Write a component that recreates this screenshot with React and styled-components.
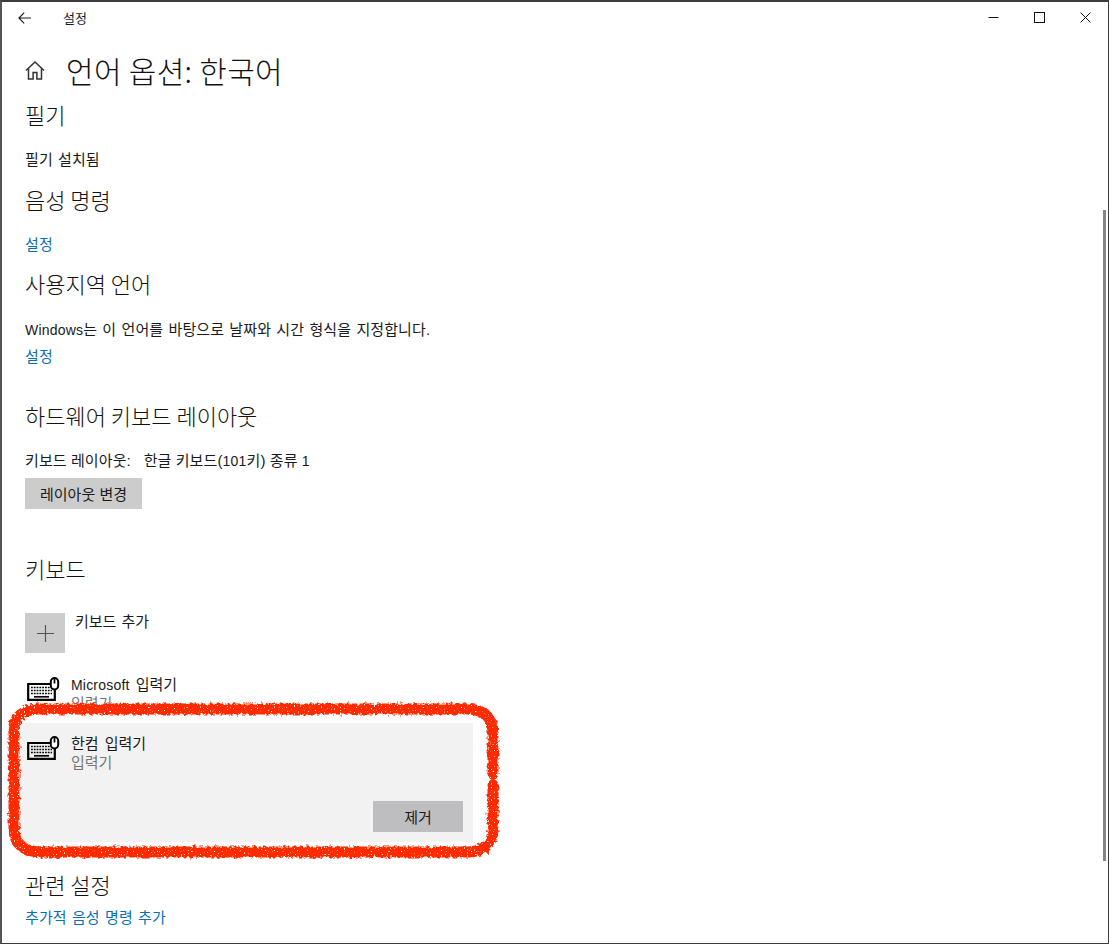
import React from "react";
import styled, { createGlobalStyle } from "styled-components";

const GlobalStyle = createGlobalStyle`
  html, body {
    margin: 0;
    padding: 0;
    background: #fff;
  }
  body {
    font-family: "Liberation Sans", "Noto Sans CJK KR", sans-serif;
    color: #1a1a1a;
  }
`;

function KeyboardIcon() {
  return (
    <IconBox>
      <svg width="33" height="26" viewBox="0 0 33 26" fill="none">
        <path d="M24 8H1.2v15.8h26.6V13" stroke="#000" strokeWidth="2.2" />
        <path d="M4 11.5h19M4 14.5h21M4 17.5h21" stroke="#000" strokeWidth="1.7" strokeDasharray="1.8 1" />
        <path d="M7 20.8h15" stroke="#000" strokeWidth="1.7" />
        <rect x="23.8" y="2" width="7.4" height="11.5" rx="3.7" fill="#fff" stroke="#000" strokeWidth="2" />
        <path d="M27.5 2.5v5" stroke="#000" strokeWidth="1.7" />
      </svg>
    </IconBox>
  );
}

function Scribble() {
  return (
    <ScribbleSvg viewBox="0 0 520 180" fill="none">
      <defs>
        <filter id="rough" x="-5%" y="-10%" width="110%" height="120%">
          <feTurbulence type="fractalNoise" baseFrequency="0.3" numOctaves="2" seed="4" result="wobble" />
          <feDisplacementMap in="SourceGraphic" in2="wobble" scale="6" result="moved" />
          <feTurbulence type="fractalNoise" baseFrequency="0.7" numOctaves="1" seed="9" />
          <feColorMatrix values="0 0 0 0 0  0 0 0 0 0  0 0 0 0 0  0 0 0 -9 6.8" result="holes" />
          <feComposite in="moved" in2="holes" operator="in" />
        </filter>
      </defs>
      <path
        d="M13 44 Q13 20 38 19 H468 Q492 20 493 42 V84 M493 95 V140 Q492 161 468 162 H42 Q14 162 14 138 V44"
        stroke="#ff2a00"
        strokeWidth="11"
        strokeLinecap="round"
        filter="url(#rough)"
      />
    </ScribbleSvg>
  );
}

export default function App() {
  return (
    <>
      <GlobalStyle />
      <Frame>
        <TitleBar>
          <BackButton>
            <svg width="14" height="12" viewBox="0 0 14 12" fill="none" stroke="#1a1a1a" strokeWidth="1.1">
              <path d="M13 6H1M6.2.6 .9 6l5.3 5.4" />
            </svg>
          </BackButton>
          <WindowTitle>설정</WindowTitle>
          <WindowControls>
            <ControlButton>
              <svg width="11" height="11" viewBox="0 0 11 11" fill="none" stroke="#111" strokeWidth="1">
                <path d="M0.5 5.5h10" />
              </svg>
            </ControlButton>
            <ControlButton>
              <svg width="11" height="11" viewBox="0 0 11 11" fill="none" stroke="#111" strokeWidth="1">
                <rect x="0.5" y="0.5" width="10" height="10" />
              </svg>
            </ControlButton>
            <ControlButton>
              <svg width="11" height="11" viewBox="0 0 11 11" fill="none" stroke="#111" strokeWidth="1">
                <path d="M.5.5l10 10M10.5.5l-10 10" />
              </svg>
            </ControlButton>
          </WindowControls>
        </TitleBar>

        <PageHeader>
          <HomeIcon>
            <svg width="20" height="19" viewBox="0 0 20 19" fill="none" stroke="#333" strokeWidth="1.5">
              <path d="M1 9.5 10 1l9 8.5" />
              <path d="M3.5 7.5V18h4.6v-6.5h3.8V18h4.6V7.5" />
            </svg>
          </HomeIcon>
          <PageTitle>언어 옵션: 한국어</PageTitle>
        </PageHeader>

        <Content>
          <Heading>필기</Heading>
          <BodyText $top={21}>필기 설치됨</BodyText>

          <Heading $top={16}>음성 명령</Heading>
          <LinkText $top={21}>설정</LinkText>

          <Heading $top={15}>사용지역 언어</Heading>
          <BodyText $top={22}><Latin>Windows</Latin>는 이 언어를 바탕으로 날짜와 시간 형식을 지정합니다.</BodyText>
          <LinkText $top={7}>설정</LinkText>

          <Heading $top={35}>하드웨어 키보드 레이아웃</Heading>
          <BodyText $top={21} $word={0}>키보드 레이아웃: &nbsp; 한글 키보드(<Latin>101</Latin>키) 종류 <Latin>1</Latin></BodyText>
          <GrayButton $width={117} $top={7}>레이아웃 변경</GrayButton>

          <Heading $top={46}>키보드</Heading>
          <AddRow>
            <AddTile>
              <svg width="17" height="17" viewBox="0 0 17 17" fill="none" stroke="#555" strokeWidth="1.2">
                <path d="M8.5 0v17M0 8.5h17" />
              </svg>
            </AddTile>
            <AddLabel>키보드 추가</AddLabel>
          </AddRow>

          <InputRow>
            <KeyboardIcon />
            <InputText>
              <InputName><Latin>Microsoft</Latin> 입력기</InputName>
              <InputKind>입력기</InputKind>
            </InputText>
          </InputRow>

          <SelectedPanel>
            <InputRow $flat>
              <KeyboardIcon />
              <InputText>
                <InputName>한컴 입력기</InputName>
                <InputKind>입력기</InputKind>
              </InputText>
            </InputRow>
            <PanelActions>
              <GrayButton $width={90} $dark>제거</GrayButton>
            </PanelActions>
          </SelectedPanel>

          <Heading $top={29}>관련 설정</Heading>
          <LinkText $top={9}>추가적 음성 명령 추가</LinkText>
        </Content>

        <Scrollbar />
        <Scribble />
      </Frame>
    </>
  );
}

const Frame = styled.div`
  position: relative;
  box-sizing: border-box;
  width: 1109px;
  height: 944px;
  overflow: hidden;
  background: #fff;
  border: 1px solid #3c3c3c;
  border-top-width: 2px;
  border-left-width: 2px;
  border-left-color: #555;
`;

const TitleBar = styled.div`
  display: flex;
  align-items: center;
  height: 31px;
`;

const BackButton = styled.div`
  display: flex;
  align-items: center;
  justify-content: center;
  width: 46px;
  margin-left: 0;
`;

const WindowTitle = styled.div`
  margin-left: 15px;
  font-size: 13px;
  color: #1a1a1a;
`;

const WindowControls = styled.div`
  display: flex;
  margin-left: auto;
`;

const ControlButton = styled.div`
  display: flex;
  align-items: center;
  justify-content: center;
  width: 46px;
  height: 31px;
`;

const PageHeader = styled.div`
  display: flex;
  align-items: center;
  height: 50px;
  margin-top: 12px;
`;

const HomeIcon = styled.div`
  display: flex;
  justify-content: center;
  width: 24px;
  margin-left: 21px;
`;

const PageTitle = styled.h1`
  margin: 0 0 0 19px;
  font-family: "Noto Sans CJK KR", sans-serif;
  font-size: 30px;
  font-weight: 300;
  letter-spacing: 0.3px;
  line-height: 40px;
  color: #111;
`;

const Content = styled.div`
  padding: 6px 0 0 23px;
`;

const Heading = styled.h2`
  margin: ${(p) => p.$top || 0}px 0 0;
  padding-bottom: 2px;
  font-family: "Noto Sans CJK KR", sans-serif;
  font-size: 22px;
  font-weight: 300;
  line-height: 26px;
  color: #111;
`;

const BodyText = styled.div`
  margin-top: ${(p) => p.$top || 0}px;
  font-size: 15px;
  letter-spacing: 0.1px;
  word-spacing: ${(p) => p.$word ?? 1}px;
  line-height: 20px;
  color: #1a1a1a;
`;

const LinkText = styled(BodyText)`
  color: #0a6fb5;
`;

const Latin = styled.span`
  font-size: 14px;
  letter-spacing: 0.2px;
`;

const GrayButton = styled.div`
  display: flex;
  align-items: center;
  justify-content: center;
  width: ${(p) => p.$width}px;
  height: 31px;
  margin-top: ${(p) => p.$top || 0}px;
  font-size: 15px;
  background: ${(p) => (p.$dark ? "#bebdbf" : "#cccccc")};
  color: #1a1a1a;
`;

const AddRow = styled.div`
  display: flex;
  gap: 10px;
  margin-top: 30px;
`;

const AddTile = styled.div`
  display: flex;
  align-items: center;
  justify-content: center;
  width: 40px;
  height: 40px;
  background: #cccccc;
`;

const AddLabel = styled.div`
  margin-top: -1px;
  font-size: 15px;
  word-spacing: 1px;
  line-height: 20px;
`;

const InputRow = styled.div`
  display: flex;
  gap: 11px;
  height: ${(p) => (p.$flat ? "auto" : "49px")};
  margin-top: ${(p) => (p.$flat ? "0" : "22px")};
  margin-left: 2px;
`;

const IconBox = styled.div`
  margin-top: 1px;
`;

const InputText = styled.div`
  flex: 1;
`;

const InputName = styled.div`
  font-size: 15px;
  word-spacing: 2px;
  line-height: 20px;
  color: #1a1a1a;
`;

const InputKind = styled.div`
  font-size: 15px;
  line-height: 18px;
  color: #767676;
`;

const SelectedPanel = styled.div`
  box-sizing: border-box;
  width: 454px;
  height: 119px;
  margin: -1px 0 0 -6px;
  padding: 11px 10px 10px 6px;
  background: #f2f2f2;
`;

const PanelActions = styled.div`
  display: flex;
  justify-content: flex-end;
  margin-top: 29px;
`;

const Scrollbar = styled.div`
  position: absolute;
  top: 208px;
  right: 2px;
  width: 3px;
  height: 651px;
  background: #858585;
`;

const ScribbleSvg = styled.svg`
  position: absolute;
  left: -2px;
  top: 688px;
  width: 520px;
  height: 180px;
  pointer-events: none;
`;
